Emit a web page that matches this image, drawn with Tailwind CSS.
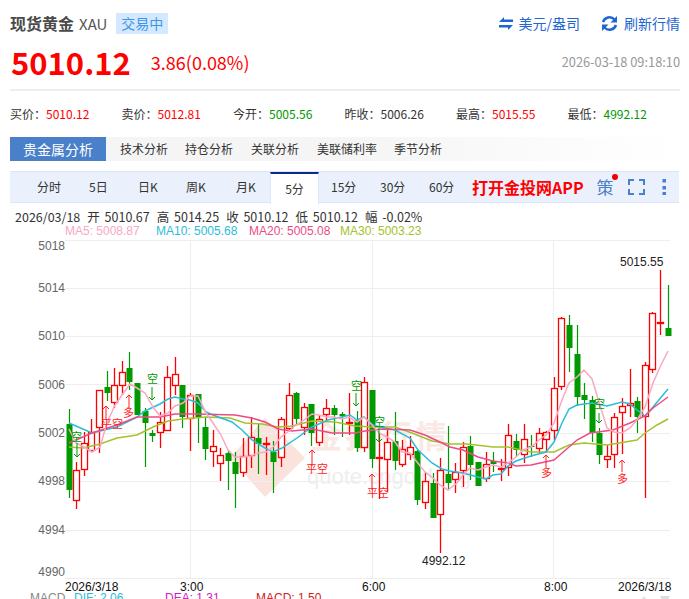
<!DOCTYPE html>
<html class="m-0 h-full">
  <head>
    <meta charset="UTF-8" />
    <title>现货黄金 XAU</title>
    <script src="https://cdn.jsdelivr.net/npm/@tailwindcss/browser@4"></script>
  </head>

  <body class="m-0 h-[599px] w-[689px] overflow-hidden bg-white font-['Noto_Sans_CJK_SC','Liberation_Sans',sans-serif] text-[#333]">
    <!-- title -->
    <div class="flex h-[35px] items-start justify-between pl-[10px] pr-[9px] pt-[13px]">
      <div class="flex items-center">
        <span class="text-[16px] leading-[21px] font-bold text-[#4a4a4a]">现货黄金</span>
        <span class="ml-[5px] text-[15px] leading-[21px] text-[#555]">XAU</span>
        <span class="ml-[9px] h-[21px] w-[52px] bg-[#d4e8ff] text-center text-[14px] leading-[21px] text-[#3d95e8]">交易中</span>
      </div>
      <div class="flex items-center text-[14px] leading-[21px] text-[#1f66d0]">
        <svg class="mr-[6px]" width="14" height="13" viewBox="0 0 14 13" fill="#1f66d0"><path d="M5 0 L5 2.500 L14 2.500 L14 5 L0 5 Z" /><path d="M0 8 L14 8 L9 13 L9 10.500 L0 10.500 Z" /></svg>
        <span>美元/盎司</span>
        <svg class="ml-[21px] mr-[6px]" width="17" height="17" viewBox="0 0 17 17" fill="none" stroke="#1f66d0" stroke-width="2.500"><path d="M2 7 A6.800 6.800 0 0 1 13.500 4.500" /><path d="M15 10 A6.800 6.800 0 0 1 3.500 12.500" /><path d="M16 1 L16 7.500 L9.500 7.500 Z" fill="#1f66d0" stroke="none" /><path d="M1 16 L1 9.500 L7.500 9.500 Z" fill="#1f66d0" stroke="none" /></svg>
        <span>刷新行情</span>
      </div>
    </div>

    <!-- price -->
    <div class="ml-[10px] mr-[9px] flex h-[56px] items-start justify-between border-b-2 border-[#eeeeee] pt-[8px]">
      <div class="flex items-center">
        <span class="ml-[1px] text-[31px] leading-[38px] font-bold text-[#ff0000]">5010.12</span>
        <span class="ml-[20px] text-[18px] leading-[38px] text-[#ff0000]">3.86(0.08%)</span>
      </div>
      <span class="text-[12.800px] leading-[38px] text-[#999]">2026-03-18 09:18:10</span>
    </div>

    <!-- quote row -->
    <div class="mx-[10px] mt-[13px] grid h-[20px] grid-cols-6 text-[12px] leading-[20px]">
      <div>买价：<span class="text-[#ff0000]">5010.12</span></div>
      <div>卖价：<span class="text-[#ff0000]">5012.81</span></div>
      <div>今开：<span class="text-[#009900]">5005.56</span></div>
      <div>昨收：<span>5006.26</span></div>
      <div>最高：<span class="text-[#ff0000]">5015.55</span></div>
      <div>最低：<span class="text-[#009900]">4992.12</span></div>
    </div>

    <!-- analysis tabs -->
    <div class="mx-[10px] mt-[13px] flex h-[24px] items-center bg-gradient-to-r from-[#f5f5f5] from-50% to-white text-[12px] leading-[24px]">
      <div class="mr-[14px] w-[96px] bg-[#4a7fc9] text-center text-[14px] text-white">贵金属分析</div>
      <span class="mr-[17px]">技术分析</span>
      <span class="mr-[18px]">持仓分析</span>
      <span class="mr-[18px]">关联分析</span>
      <span class="mr-[17px]">美联储利率</span>
      <span>季节分析</span>
    </div>

    <!-- period tabs -->
    <div class="mx-[10px] mt-[10px] flex h-[32px] items-center border-y border-[#dde6f6] bg-[#eaf1fc] text-[12px] text-[#333]">
      <span class="ml-[27px] w-[52px]">分时</span>
      <span class="w-[49px]">5日</span>
      <span class="w-[48px]">日K</span>
      <span class="w-[50px]">周K</span>
      <span class="w-[34px]">月K</span>
      <span class="mb-[-1px] h-[32px] w-[49px] self-start border-x border-t-2 border-[#dde6f6] border-t-[#0a2a8c] bg-white text-center leading-[30px]">5分</span>
      <span class="ml-[12px] w-[49px]">15分</span>
      <span class="w-[49px]">30分</span>
      <span class="w-[43px]">60分</span>
      <span class="text-[16px] font-bold text-[#ff0000]">打开金投网APP</span>
      <span class="relative ml-[13px] text-[17px] text-[#4a7fc9]">策<i class="absolute right-[-4px] top-[0px] h-[6px] w-[6px] rounded-full bg-[#ee0000]"></i></span>
      <svg class="ml-[14px]" width="17" height="16" viewBox="0 0 17 16" fill="none" stroke="#4a7fc9" stroke-width="2"><path d="M1 6 V1 H6" /><path d="M11 1 H16 V6" /><path d="M16 10 V15 H11" /><path d="M6 15 H1 V10" /></svg>
      <svg class="ml-[17px]" width="5" height="16" viewBox="0 0 5 16" fill="#4a7fc9"><rect x="0.500" y="0" width="3.500" height="3.500" /><rect x="0.500" y="7" width="3.500" height="3.500" /><rect x="0.500" y="13" width="3.500" height="3.500" /></svg>
    </div>

    <!-- ohlc -->
    <div class="ml-[15px] mt-[6px] flex h-[15px] gap-[7px] whitespace-nowrap text-[12.500px] leading-[15px] [word-spacing:2px]">
      <span>2026/03/18</span>
      <span>开 5010.67</span>
      <span>高 5014.25</span>
      <span>收 5010.12</span>
      <span>低 5010.12</span>
      <span>幅 -0.02%</span>
    </div>
    <div class="ml-[65px] flex h-[14px] font-['Liberation_Sans',sans-serif] text-[12px] leading-[14px] whitespace-nowrap">
      <span class="w-[91px] text-[#f9a8c4]">MA5: 5008.87</span>
      <span class="w-[93px] text-[#2bbcd8]">MA10: 5005.68</span>
      <span class="w-[91px] text-[#ec4c86]">MA20: 5005.08</span>
      <span class="text-[#a3c22e]">MA30: 5003.23</span>
    </div>

    <!-- chart, coordinates are page pixels -->
    <svg id="chart" class="block" width="689" height="361" viewBox="0 238 689 361" font-family="Liberation Sans, sans-serif" font-size="12"></svg>

    <script>
      var svg = document.getElementById("chart");
      var out = "";

      // watermark
      out += '<path d="M265 418 L305 458 L265 497 L230 458 Z" fill="#fae3dd"/>';
      out += '<text x="310" y="448" font-size="32" font-weight="700" letter-spacing="3" fill="#f9e8e4" font-family="Noto Sans CJK SC">金投行情</text>';
      out += '<text x="307" y="484" font-size="22" fill="#eeeeee">quote.cngold.org</text>';

      // grid
      [240, 288, 336, 384, 433, 481, 530, 578].forEach(function (y) {
        out += '<line x1="65" x2="670" y1="' + (y + 0.5) + '" y2="' + (y + 0.5) + '" stroke="#eeeeee"/>';
      });
      [190, 372, 553].forEach(function (x) {
        out += '<line x1="' + (x + 0.5) + '" x2="' + (x + 0.5) + '" y1="240" y2="578" stroke="#eeeeee"/>';
      });

      // y axis
      [[5018, 250], [5014, 292], [5010, 340], [5006, 389], [5002, 437], [4998, 485], [4994, 534], [4990, 576]].forEach(function (t) {
        out += '<text x="65" y="' + t[1] + '" text-anchor="end" fill="#666">' + t[0] + "</text>";
      });

      // x axis
      [[65, "2026/3/18"], [180, "3:00"], [362, "6:00"], [544, "8:00"], [618, "2026/3/18"]].forEach(function (t) {
        out += '<text x="' + t[0] + '" y="591" fill="#111">' + t[1] + "</text>";
      });

      // candles: r/g, wick top, wick bottom, body top, body bottom
      var candles = [
        ["g",409,498,424,490],["r",462,509,470,501],["r",432,476,443,470],["r",419,452,432,451],["r",390,453,390,428],
        ["g",371,401,387,393],["r",368,408,385,403],["r",361,395,372,386],["g",352,390,368,382],["g",383,415,383,415],
        ["g",408,467,411,423],["g",430,442,433,436],["r",412,448,422,433],["r",366,431,377,431],["r",357,395,374,386],
        ["g",385,428,385,417],["r",393,451,395,419],["g",394,443,394,417],["g",417,460,427,449],["r",430,467,446,452],
        ["r",448,481,455,464],["g",450,490,453,461],["g",452,508,462,474],["r",438,477,456,473],["r",417,468,437,456],
        ["g",423,474,438,444],["r",437,475,443,445],["g",441,493,452,462],["r",417,467,419,458],["r",383,430,395,429],
        ["g",392,425,393,419],["r",403,435,407,428],["g",404,446,404,433],["r",415,446,419,443],["r",399,420,408,415],
        ["g",405,435,408,415],["g",412,437,414,416],["r",393,435,422,424],["g",411,452,420,448],["r",377,452,382,448],
        ["g",390,468,390,459],["r",433,499,457,459],["r",430,492,442,460],["g",412,470,441,461],["r",440,467,449,465],
        ["r",436,460,447,455],["g",450,505,451,500],["r",472,509,481,503],["g",473,518,483,518],["r",458,553,470,515],
        ["g",426,489,474,483],["r",463,493,472,480],["r",442,487,447,471],["g",436,480,446,465],["g",462,486,462,486],
        ["r",452,482,464,479],["g",452,472,461,464],["r",459,481,468,470],["r",424,476,435,468],["g",434,457,441,450],
        ["r",424,463,439,455],["g",435,457,446,447],["r",428,454,433,449],["r",431,453,432,440],["r",377,440,388,431],
        ["r",317,390,318,387],["g",315,372,325,348],["g",325,406,354,397],["g",383,419,395,400],["g",396,442,400,433],
        ["g",428,464,433,455],["r",445,468,456,460],["r",413,468,417,455],["r",398,454,406,413],["r",369,417,403,406],
        ["g",397,433,401,417],["r",362,498,365,417],["r",312,373,313,370],["r",270,335,322,323],["g",285,336,328,336]
      ];
      candles.forEach(function (c, i) {
        var x = Math.round(68.7 + 7.58 * i);
        if (c[0] == "g") {
          out += '<line x1="' + (x + 0.5) + '" x2="' + (x + 0.5) + '" y1="' + c[1] + '" y2="' + c[2] + '" stroke="#009900" stroke-width="1.200"/>';
          out += '<rect x="' + (x - 2.5) + '" y="' + c[3] + '" width="6" height="' + Math.max(c[4] - c[3], 1) + '" fill="#009900"/>';
        } else {
          out += '<line x1="' + (x + 0.5) + '" x2="' + (x + 0.5) + '" y1="' + c[1] + '" y2="' + c[2] + '" stroke="#ff0000" stroke-width="1.300"/>';
          out += '<rect x="' + (x - 2.5) + '" y="' + (c[3] + 0.5) + '" width="6" height="' + Math.max(c[4] - c[3] - 1, 1) + '" fill="#ffffff" stroke="#ff0000" stroke-width="1.300"/>';
        }
      });

      // moving averages
      var lines = {
        "#a3c22e": "69,447 83,448 100,444 117,438 137,435 153,427 168,421 183,419 206,417 230,418 245,423 262,424 278,427 292,426 312,421 335,422 355,426 372,427 395,427 412,433 432,441 450,444 467,444 493,447 508,447 531,452 554,452 569,445 584,443 607,445 637,440 645,433 657,425 668,419",
        "#2bbcd8": "69,423 92,433 100,431 117,427 137,417 145,411 160,404 168,399 175,397 183,399 190,400 198,403 206,412 213,415 221,418 232,422 242,430 252,440 265,448 273,452 282,448 297,438 312,427 328,420 350,415 357,420 364,417 373,425 380,427 395,430 410,438 418,450 432,463 442,469 450,471 463,473 478,477 486,479 493,475 501,474 508,466 516,461 531,456 546,452 554,442 562,423 569,409 577,405 592,403 607,406 622,402 630,404 637,410 645,416 653,407 668,389",
        "#ec4c86": "69,443 92,433 117,425 137,417 160,417 175,414 198,414 235,415 252,418 265,422 278,429 292,431 312,429 332,433 355,433 365,431 382,429 410,430 425,435 442,443 450,447 463,450 478,457 493,461 508,463 516,466 531,465 554,460 569,447 577,440 590,433 613,430 630,423 645,416 653,408 668,397",
        "#f9a8c4": "69,429 76,443 84,447 92,452 100,447 107,423 115,405 122,395 130,384 137,388 145,393 153,407 160,416 168,413 175,406 183,403 190,396 198,396 206,413 213,423 221,435 228,450 235,457 243,457 251,456 258,453 266,452 273,447 281,437 289,431 296,425 304,420 312,414 319,415 327,417 334,417 342,419 349,417 357,422 364,417 372,425 379,433 387,437 395,442 402,452 410,453 417,462 425,472 433,478 440,485 448,490 457,483 463,475 470,468 478,470 486,467 493,465 501,467 508,463 516,457 523,450 531,447 539,440 546,435 554,423 562,400 569,383 577,377 584,370 592,379 599,402 607,428 614,432 622,433 630,428 637,420 645,407 653,383 660,367 668,351"
      };
      Object.keys(lines).forEach(function (color) {
        out += '<polyline points="' + lines[color] + '" fill="none" stroke="' + color + '" stroke-width="1.500"/>';
      });

      // trade signals: x, arrow y1, arrow y2, text x, text y, label
      function arrow(x, y1, y2, color) {
        var d = y2 > y1 ? -1 : 1;
        return '<path d="M' + x + " " + y1 + " L" + x + " " + y2 + " M" + (x - 3) + " " + (y2 + d * 3) + " L" + x + " " + y2 + " L" + (x + 3) + " " + (y2 + d * 3) + '" fill="none" stroke="' + color + '"/>';
      }
      function signal(x, y1, y2, tx, ty, label, color) {
        out += arrow(x, y1, y2, color);
        out += '<text x="' + tx + '" y="' + ty + '" font-size="11" fill="' + color + '" font-family="Noto Sans CJK SC">' + label + "</text>";
      }
      signal(77, 443, 457, 71, 441, "空", "#009900");
      signal(106, 419, 406, 101, 428, "平空", "#ff2222");
      signal(129, 408, 395, 123, 417, "多", "#ff2222");
      signal(152, 387, 400, 147, 383, "空", "#009900");
      signal(312, 466, 450, 306, 473, "平空", "#ff2222");
      signal(356, 393, 406, 351, 390, "空", "#009900");
      signal(379, 428, 442, 374, 426, "空", "#009900");
      signal(372, 490, 474, 367, 497, "平空", "#ff2222");
      signal(546, 467, 455, 541, 477, "多", "#ff2222");
      signal(622, 472, 460, 617, 483, "多", "#ff2222");
      signal(599, 413, 423, 594, 408, "空", "#009900");

      // high / low labels
      out += '<text x="620" y="266" fill="#222">5015.55</text>';
      out += '<text x="422" y="565" fill="#222">4992.12</text>';

      // macd legend, cut off by the window
      out += '<text x="30" y="602" fill="#888">MACD</text>';
      out += '<text x="74" y="602" fill="#2bbcd8">DIF: 2.06</text>';
      out += '<text x="165" y="602" fill="#cc22bb">DEA: 1.31</text>';
      out += '<text x="256" y="602" fill="#cc2222">MACD: 1.50</text>';
      out += '<path d="M644 596 L649 604 L639 604 Z M660 596 L670 596 L665 604 Z" fill="#dddddd"/>';

      svg.innerHTML = out;
    </script>
  </body>
</html>
